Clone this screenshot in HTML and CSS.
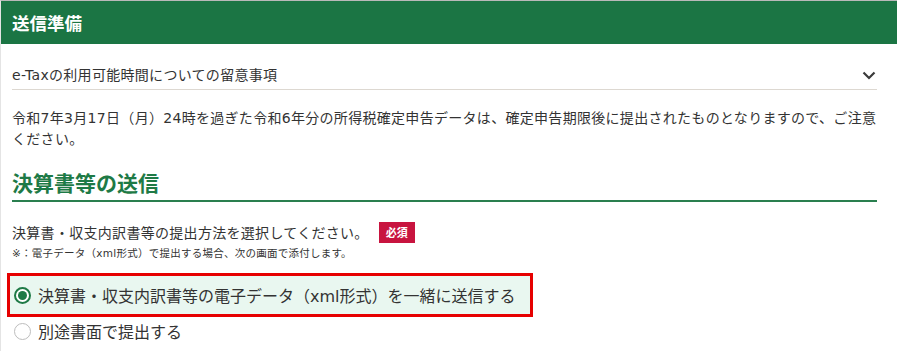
FILE: index.html
```html
<!DOCTYPE html>
<html lang="ja">
<head>
    <meta charset="UTF-8">
    <meta name="viewport" content="width=device-width, initial-scale=1.0">
    <title>送信準備</title>
    <link rel="stylesheet" href="styles.css">
</head>
<body>
    <div class="panel">
        <div class="panel-head">送信準備</div>
        <div class="panel-body">
            <div class="accordion">
                <span>e-Taxの利用可能時間についての留意事項</span>
                <svg class="chevron" width="14" height="9" viewBox="0 0 14 9">
                    <path d="M1.5 1.5 L7 7 L12.5 1.5" fill="none" stroke="#3a3a3a" stroke-width="2.2"/>
                </svg>
            </div>

            <p class="notice">令和7年3月17日（月）24時を過ぎた令和6年分の所得税確定申告データは、確定申告期限後に提出されたものとなりますので、ご注意ください。</p>

            <h2 class="section-title">決算書等の送信</h2>

            <div class="field-label">決算書・収支内訳書等の提出方法を選択してください。<span class="badge">必須</span></div>
            <p class="field-note">※：電子データ（xml形式）で提出する場合、次の画面で添付します。</p>

            <div class="choices">
                <label class="radio-row selected">
                    <span class="radio checked"></span>
                    決算書・収支内訳書等の電子データ（xml形式）を一緒に送信する
                </label>
                <label class="radio-row">
                    <span class="radio"></span>
                    別途書面で提出する
                </label>
            </div>
        </div>
    </div>
</body>
</html>
```

FILE: styles.css
```css
body {
    margin: 0;
    background: #fff;
    color: #333;
    font-family: "DejaVu Sans", "Noto Sans CJK JP", sans-serif;
}
.panel {
    border-top: 1px solid #b9b9b9;
    border-left: 1px solid #e4e4e4;
    height: 350px;
    overflow: hidden;
}
.panel-head {
    background: #1b7544;
    color: #fff;
    font-family: "Noto Sans CJK JP", sans-serif;
    font-weight: bold;
    font-size: 17.5px;
    height: 43px;
    line-height: 43px;
    padding-left: 11px;
}
.panel-body {
    padding: 0 20px 0 11px;
}
.accordion {
    display: flex;
    align-items: center;
    justify-content: space-between;
    font-size: 14px;
    letter-spacing: 0.3px;
    line-height: 20px;
    padding: 21px 0 4px;
    border-bottom: 1px solid #ddd8d1;
}
.chevron {
    margin-right: 1px;
}
.notice {
    margin: 18px 0 0;
    font-size: 14px;
    letter-spacing: 0.3px;
    line-height: 21px;
}
.section-title {
    margin: 18px 0 0;
    font-family: "Noto Sans CJK JP", sans-serif;
    font-size: 21px;
    line-height: 28px;
    font-weight: bold;
    color: #1e7a46;
    padding-bottom: 4px;
    border-bottom: 2px solid #2a7f4f;
}
.field-label {
    margin-top: 20px;
    display: flex;
    align-items: center;
    font-size: 14px;
    letter-spacing: 0.3px;
    line-height: 20px;
}
.badge {
    margin-left: 10px;
    background: #c8143f;
    color: #fff;
    font-family: "Noto Sans CJK JP", sans-serif;
    font-size: 11px;
    font-weight: bold;
    letter-spacing: 0;
    width: 36px;
    height: 21px;
    line-height: 21px;
    text-align: center;
}
.field-note {
    margin: 3px 0 0;
    font-size: 10.5px;
    letter-spacing: 0.25px;
    line-height: 14px;
}
.choices {
    margin: 13px 0 0 -5px;
    display: flex;
    flex-direction: column;
    align-items: flex-start;
    gap: 2px;
}
.radio-row {
    display: flex;
    align-items: center;
    gap: 7px;
    font-size: 16px;
    height: 38px;
    padding: 0 14px 0 4px;
    border: 3px solid transparent;
}
.radio-row + .radio-row {
    height: 24px;
    border-width: 0 3px;
}
.radio-row.selected {
    border-color: #e60000;
    background: #e9f7f0;
}
.radio {
    width: 17px;
    height: 17px;
    box-sizing: border-box;
    border: 1px solid #bdbdbd;
    border-radius: 50%;
    background: #fff;
    display: flex;
    align-items: center;
    justify-content: center;
}
.radio.checked {
    border: 2px solid #1e7a46;
}
.radio.checked::after {
    content: "";
    width: 9px;
    height: 9px;
    border-radius: 50%;
    background: #1e7a46;
}
```
